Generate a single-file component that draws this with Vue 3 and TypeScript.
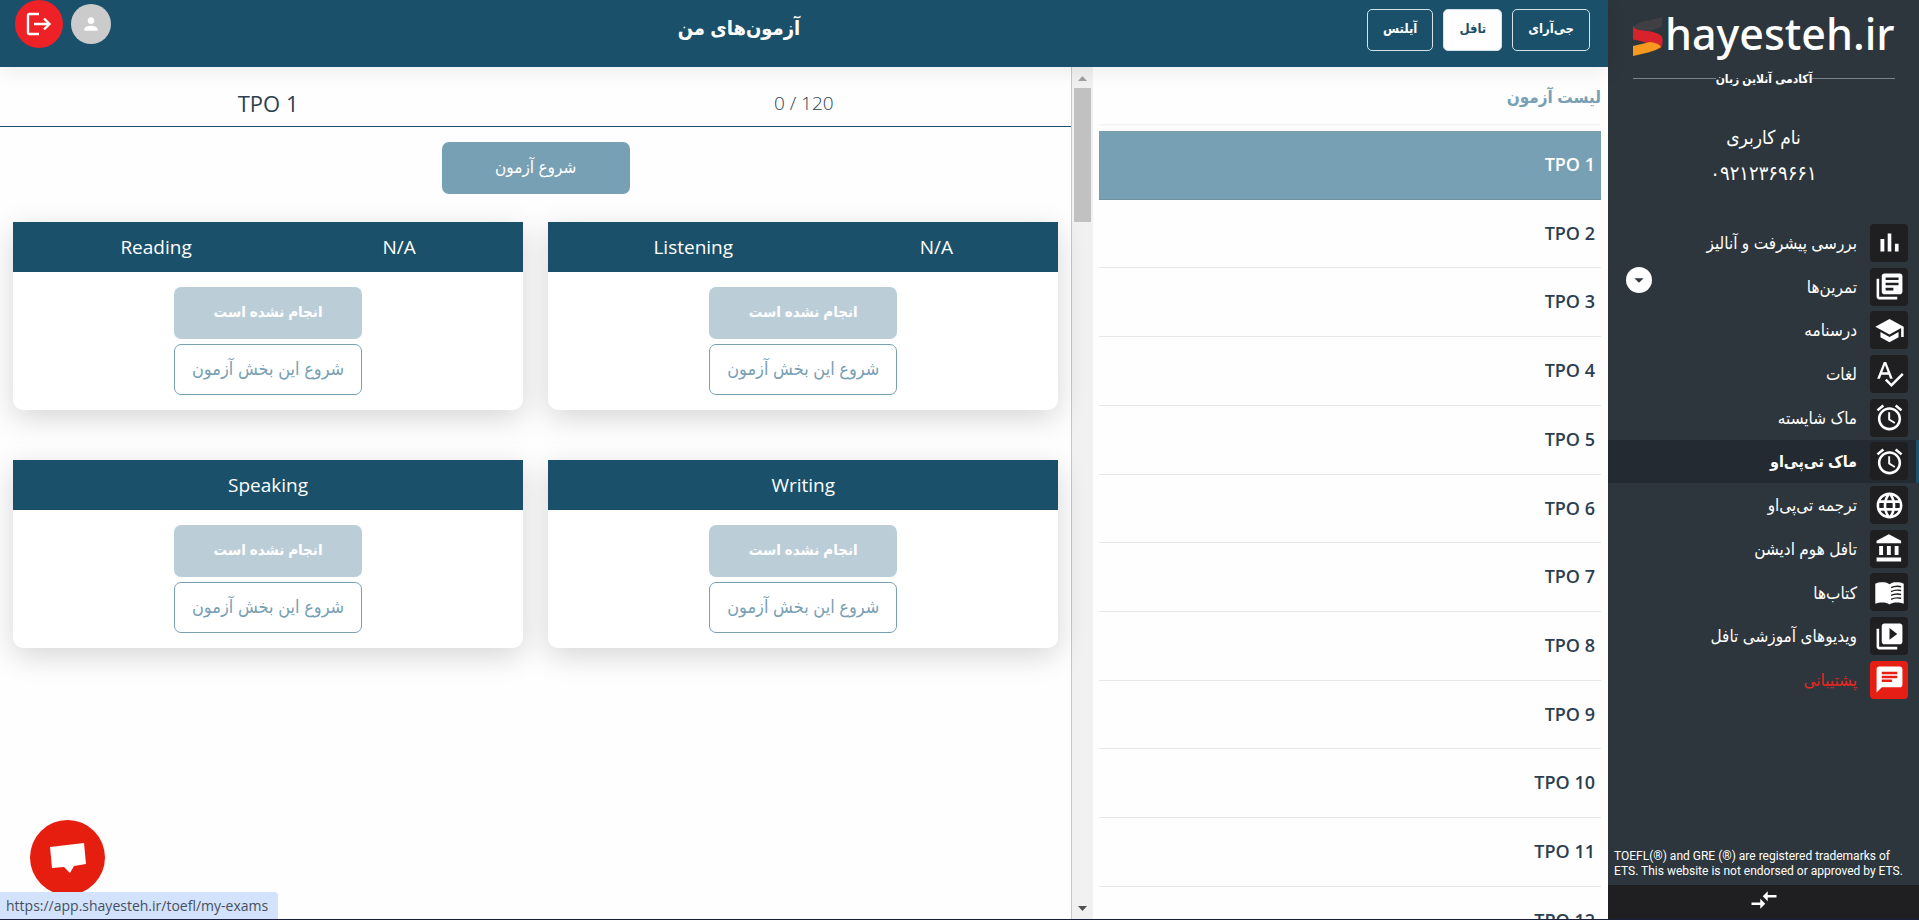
<script setup lang="ts">
import { ref } from 'vue'

interface NavItem {
  label: string
  icon: string
  lines?: string
  expandable?: boolean
  danger?: boolean
}

interface Section {
  name: string
  score?: string
}

const alarm =
  'M22 5.72l-4.6-3.86-1.29 1.53 4.6 3.86L22 5.72zM7.88 3.39L6.6 1.86 2 5.71l1.29 1.53 4.59-3.85zM12.5 8H11v6l4.75 2.85.75-1.23-4-2.37V8zM12 4c-4.97 0-9 4.03-9 9s4.02 9 9 9c4.97 0 9-4.03 9-9s-4.03-9-9-9zm0 16c-3.87 0-7-3.13-7-7s3.13-7 7-7 7 3.13 7 7-3.13 7-7 7z'

const navItems: NavItem[] = [
  { label: 'بررسی پیشرفت و آنالیز', icon: 'M5 9.2h3V19H5zM10.6 5h2.8v14h-2.8zm5.6 8H19v6h-2.8z' },
  {
    label: 'تمرین‌ها',
    expandable: true,
    icon: 'M4 6H2v14c0 1.1.9 2 2 2h14v-2H4V6zm16-4H8c-1.1 0-2 .9-2 2v12c0 1.1.9 2 2 2h12c1.1 0 2-.9 2-2V4c0-1.1-.9-2-2-2zm-1 9H9V9h10v2zm-4 4H9v-2h6v2zm4-8H9V5h10v2z',
  },
  { label: 'درسنامه', icon: 'M5 13.18v4L12 21l7-3.82v-4L12 17l-7-3.82zM12 3L1 9l11 6 9-4.91V17h2V9L12 3z' },
  {
    label: 'لغات',
    icon: 'M12.45 16h2.09L9.43 3H7.57L2.46 16h2.09l1.12-3h5.64l1.14 3zm-6.02-5L8.5 5.48 10.57 11H6.43zm15.16.59l-8.09 8.09L9.83 16l-1.41 1.41 5.09 5.09L23 13l-1.41-1.41z',
  },
  { label: 'ماک شایسته', icon: alarm },
  { label: 'ماک تی‌پی‌او', icon: alarm },
  {
    label: 'ترجمه تی‌پی‌او',
    icon: 'M11.99 2C6.47 2 2 6.48 2 12s4.47 10 9.99 10C17.52 22 22 17.52 22 12S17.52 2 11.99 2zm6.93 6h-2.95c-.32-1.25-.78-2.45-1.38-3.56 1.84.63 3.37 1.91 4.33 3.56zM12 4.04c.83 1.2 1.48 2.53 1.91 3.96h-3.82c.43-1.43 1.08-2.76 1.91-3.96zM4.26 14C4.1 13.36 4 12.69 4 12s.1-1.36.26-2h3.38c-.08.66-.14 1.32-.14 2 0 .68.06 1.34.14 2H4.26zm.82 2h2.95c.32 1.25.78 2.45 1.38 3.56-1.84-.63-3.37-1.9-4.33-3.56zm2.95-8H5.08c.96-1.66 2.49-2.93 4.33-3.56C8.81 5.55 8.35 6.75 8.03 8zM12 19.96c-.83-1.2-1.48-2.53-1.91-3.96h3.82c-.43 1.43-1.08 2.76-1.91 3.96zM14.34 14H9.66c-.09-.66-.16-1.32-.16-2 0-.68.07-1.35.16-2h4.68c.09.65.16 1.32.16 2 0 .68-.07 1.34-.16 2zm.25 5.56c.6-1.11 1.06-2.31 1.38-3.56h2.95c-.96 1.65-2.49 2.93-4.33 3.56zM16.36 14c.08-.66.14-1.32.14-2 0-.68-.06-1.34-.14-2h3.38c.16.64.26 1.31.26 2s-.1 1.36-.26 2h-3.38z',
  },
  {
    label: 'تافل هوم ادیشن',
    icon: 'M4 10v7h3v-7H4zm6 0v7h3v-7h-3zM2 22h19v-3H2v3zm14-12v7h3v-7h-3zm-4.5-9L2 6v2h19V6l-9.5-5z',
  },
  {
    label: 'کتاب‌ها',
    icon: 'M12 5.6C10 4.2 8.5 4 6.5 4S2.5 4.3 1 5.3V20.8C2.5 19.9 4.5 19.7 6.5 19.7S10.5 20 12 21.3C13.5 20 15.5 19.7 17.5 19.7S21.5 19.9 23 20.8V5.3C21.5 4.3 19.5 4 17.5 4S14 4.2 12 5.6z',
    lines: 'M13.2 8.3C15.5 7.1 18.5 7 21 7.5M13.2 11.3C15.5 10.1 18.5 10 21 10.5M13.2 14.3C15.5 13.1 18.5 13 21 13.5M13.2 17.3C15.5 16.1 18.5 16 21 16.5',
  },
  {
    label: 'ویدیوهای آموزشی تافل',
    icon: 'M4 6H2v14c0 1.1.9 2 2 2h14v-2H4V6zm16-4H8c-1.1 0-2 .9-2 2v12c0 1.1.9 2 2 2h12c1.1 0 2-.9 2-2V4c0-1.1-.9-2-2-2zm-8 12.5v-9l6 4.5-6 4.5z',
  },
  {
    label: 'پشتیبانی',
    danger: true,
    icon: 'M20 2H4c-1.1 0-1.99.9-1.99 2L2 22l4-4h14c1.1 0 2-.9 2-2V4c0-1.1-.9-2-2-2zM6 9h12v2H6V9zm8 5H6v-2h8v2zm4-6H6V6h12v2z',
  },
]

const courses = ['جی‌آرای', 'تافل', 'آیلتس']
const exams = Array.from({ length: 12 }, (_, i) => `TPO ${i + 1}`)
const sections: Section[] = [
  { name: 'Reading', score: 'N/A' },
  { name: 'Listening', score: 'N/A' },
  { name: 'Speaking' },
  { name: 'Writing' },
]

const activeNav = ref('ماک تی‌پی‌او')
const activeCourse = ref('تافل')
const activeExam = ref('TPO 1')
</script>

<template>
  <div class="app" dir="rtl" lang="fa">
    <aside class="sidebar">
      <div class="brand">
        <div class="brand-row" dir="ltr">
          <svg class="brand-mark" viewBox="0 0 30 40" aria-hidden="true">
            <path d="M1 10Q6 6 12 5T29 1V10Q26 13 15 15L0 13z" fill="#3f3f44" />
            <path d="M0 10Q2 14 10 14.5Q29 16 29.5 23Q30 30 27 33Q26 29 0 23.5z" fill="#d8222c" />
            <path d="M0 30L17 26Q26 27 28 31Q24 35 0 40z" fill="#f7991f" />
          </svg>
          <span class="brand-name">hayesteh.ir</span>
        </div>
        <div class="tagline"><span>آکادمی آنلاین زبان</span></div>
      </div>

      <div class="user">
        <div class="user-name">نام کاربری</div>
        <div class="user-phone">۰۹۲۱۲۳۶۹۶۶۱</div>
      </div>

      <nav class="nav">
        <div
          v-for="item in navItems"
          :key="item.label"
          class="nav-item"
          :class="{ active: item.label === activeNav, danger: item.danger }"
        >
          <a href="#" class="nav-link" @click.prevent="activeNav = item.label">
            <span class="nav-icon">
              <svg viewBox="0 0 24 24" aria-hidden="true">
                <path :d="item.icon" fill="#fff" />
                <path v-if="item.lines" :d="item.lines" fill="none" stroke="#1f1f22" stroke-width="1.1" />
              </svg>
            </span>
            <span>{{ item.label }}</span>
          </a>
          <button v-if="item.expandable" type="button" class="expand" :aria-label="item.label">
            <svg viewBox="0 0 24 24" aria-hidden="true"><path d="M7 10l5 5 5-5z" fill="#2d363c" /></svg>
          </button>
        </div>
      </nav>

      <p class="legal" dir="ltr" lang="en">
        TOEFL(®) and GRE (®) are registered trademarks of ETS. This website is not endorsed or approved by ETS.
      </p>
      <button type="button" class="collapse" aria-label="بستن منو">
        <svg viewBox="0 0 24 24" aria-hidden="true">
          <path d="M9.01 14H2v2h7.01v3L13 15l-3.99-4v3zm5.98-1v-3H22V8h-7.01V5L11 9l3.99 4z" fill="#fff" />
        </svg>
      </button>
    </aside>

    <div class="page">
      <header class="topbar">
        <div class="courses">
          <button
            v-for="course in courses"
            :key="course"
            type="button"
            class="course"
            :class="{ selected: course === activeCourse }"
            @click="activeCourse = course"
          >
            {{ course }}
          </button>
        </div>
        <h1 class="page-title">آزمون‌های من</h1>
        <div class="account">
          <button type="button" class="avatar" aria-label="پروفایل">
            <svg viewBox="0 0 24 24" aria-hidden="true">
              <path
                d="M12 12c2.21 0 4-1.79 4-4s-1.79-4-4-4-4 1.79-4 4 1.79 4 4 4zm0 2c-2.67 0-8 1.34-8 4v2h16v-2c0-2.66-5.33-4-8-4z"
                fill="#fff"
              />
            </svg>
          </button>
          <button type="button" class="logout" aria-label="خروج">
            <svg viewBox="0 0 26 24" aria-hidden="true">
              <path d="M13 2H3.5Q2 2 2 3.5v17Q2 22 3.5 22H13M8 12h15M18 6.5 23.5 12 18 17.5" fill="none" stroke="#fff" stroke-width="2.4" />
            </svg>
          </button>
        </div>
      </header>

      <div class="content">
        <section class="exam-pane">
          <div class="scrollbar" aria-hidden="true">
            <svg viewBox="0 0 21 21"><path d="M6 14h9l-4.5-5z" fill="#a0a0a0" /></svg>
            <div class="track"><div class="thumb"></div></div>
            <svg viewBox="0 0 21 21"><path d="M6 8h9l-4.5 5z" fill="#505050" /></svg>
          </div>
          <div class="exam-body">
            <h2 class="list-title">لیست آزمون</h2>
            <ul class="exam-list">
              <li v-for="exam in exams" :key="exam">
                <button
                  type="button"
                  class="exam"
                  :class="{ current: exam === activeExam }"
                  @click="activeExam = exam"
                >
                  <bdi>{{ exam }}</bdi>
                </button>
              </li>
            </ul>
          </div>
        </section>

        <main class="detail" dir="ltr">
          <div class="summary">
            <h2>{{ activeExam }}</h2>
            <span class="total">0 / 120</span>
          </div>
          <div class="start-row">
            <button type="button" class="action start">شروع آزمون</button>
          </div>
          <div class="cards">
            <article v-for="section in sections" :key="section.name" class="card">
              <header class="card-head">
                <span>{{ section.name }}</span>
                <span v-if="section.score">{{ section.score }}</span>
              </header>
              <div class="card-body">
                <button type="button" class="action status" disabled>انجام نشده است</button>
                <button type="button" class="action outline">شروع این بخش آزمون</button>
              </div>
            </article>
          </div>
        </main>
      </div>
    </div>

    <button type="button" class="chat" aria-label="گفتگو">
      <svg viewBox="0 0 36 30" aria-hidden="true">
        <path d="M0 4 34 0l2 21-12 2-4 7-6-6-12 1z" fill="#fff" />
      </svg>
    </button>
    <div class="status-url" dir="ltr">https://app.shayesteh.ir/toefl/my-exams</div>
  </div>
</template>

<style>
html,
body {
  margin: 0;
  background: #fefefe;
}
</style>

<style scoped>
.app {
  display: flex;
  height: 100vh;
  overflow: hidden;
  box-sizing: border-box;
  border-bottom: 1px solid #1b1f3b;
  font-family: 'Open Sans', 'DejaVu Sans Condensed', 'DejaVu Sans', sans-serif;
  font-size: 16px;
  color: #2c3e50;
}

button {
  font: inherit;
  border: 0;
  padding: 0;
  cursor: pointer;
}

svg {
  display: block;
}

/* Sidebar */
.sidebar {
  flex: 0 0 311px;
  min-width: 0;
  display: flex;
  flex-direction: column;
  background: #2d363c;
  color: #fff;
}

.brand {
  padding: 8px 24px 0 25px;
}

.brand-row {
  display: flex;
  align-items: center;
  gap: 2px;
  height: 56px;
}

.brand-mark {
  flex: none;
  width: 30px;
  height: 40px;
}

.brand-name {
  font-family: 'Noto Sans', sans-serif;
  font-size: 43px;
  line-height: 52px;
  font-weight: 500;
  padding-bottom: 4px;
}

.tagline {
  display: flex;
  align-items: center;
  height: 28px;
  font-size: 12px;
  font-weight: 700;
  white-space: nowrap;
}

.tagline::before,
.tagline::after {
  content: '';
  flex: 1;
  height: 1px;
  background: #78838a;
}

.user {
  padding: 27px 0 30px;
  text-align: center;
}

.user-name,
.user-phone {
  font-size: 19px;
  line-height: 36px;
}

.user-phone {
  font-size: 20px;
}

.nav-item {
  display: flex;
  align-items: center;
  justify-content: space-between;
  box-sizing: border-box;
  padding: 0 11px 0 18px;
}

.nav-item.active {
  background: #242a31;
  box-shadow: inset -3px 0 #1a5069;
  font-weight: 700;
}

.nav-item.danger {
  color: #e8281e;
}

.nav-link {
  display: flex;
  align-items: center;
  gap: 13px;
  padding: 8px 0;
  font-size: 17px;
  line-height: 1.63;
  color: inherit;
  text-decoration: none;
}

.active .nav-link {
  font-size: 16px;
  line-height: 1.73;
}

.nav-icon {
  display: flex;
  align-items: center;
  justify-content: center;
  width: 38px;
  height: 38px;
  margin: -6px 0;
  border-radius: 4px;
  background: #1f1f22;
}

.danger .nav-icon {
  background: #e61e14;
}

.nav-icon svg {
  width: 31px;
  height: 31px;
}

.expand {
  display: flex;
  align-items: center;
  justify-content: center;
  align-self: flex-start;
  width: 26px;
  height: 26px;
  margin-top: 2px;
  border-radius: 50%;
  background: #fff;
}

.expand svg {
  width: 22px;
  height: 22px;
}

.legal {
  margin: auto 0 0;
  padding: 0 6px 6px;
  font-family: Roboto, sans-serif;
  font-size: 12px;
  line-height: 15px;
}

.collapse {
  display: flex;
  align-items: center;
  justify-content: center;
  height: 34px;
  padding-bottom: 4px;
  background: #1f1f22;
}

.collapse svg {
  width: 30px;
  height: 30px;
}

/* Top bar */
.page {
  flex: 1;
  min-width: 0;
  display: flex;
  flex-direction: column;
}

.topbar {
  position: relative;
  z-index: 1;
  display: flex;
  align-items: flex-start;
  justify-content: space-between;
  height: 67px;
  padding: 0 18px 0 15px;
  background: #1a5069;
  box-shadow: 0 4px 20px rgba(0, 0, 0, 0.08);
  color: #fff;
}

.courses {
  display: flex;
  gap: 10px;
  padding-top: 9px;
}

.course {
  height: 42px;
  padding: 0 15px 4px;
  border: 1px solid #d5e2e8;
  border-radius: 5px;
  background: transparent;
  font-size: 13px;
  font-weight: 700;
  color: #fff;
}

.course.selected {
  background: #fff;
  color: #1a5069;
}

.page-title {
  margin: 0;
  font-size: 20px;
  line-height: 56px;
  font-weight: 700;
}

.account {
  display: flex;
  align-items: center;
  gap: 8px;
}

.avatar,
.logout {
  display: flex;
  align-items: center;
  justify-content: center;
  width: 40px;
  height: 40px;
  border-radius: 50%;
  background: #cbcbcb;
}

.avatar svg {
  width: 20px;
  height: 20px;
}

.logout {
  width: 48px;
  height: 48px;
  background: #ee2127;
}

.logout svg {
  width: 26px;
  height: 24px;
}

/* Exam list */
.content {
  flex: 1;
  min-height: 0;
  display: flex;
}

.exam-pane {
  flex: 1;
  display: flex;
  min-width: 0;
  border-left: 1px solid #c8c8c8;
  overflow: hidden;
}

.scrollbar {
  order: 1;
  flex: 0 0 21px;
  display: flex;
  flex-direction: column;
  background: #f1f1f1;
}

.track {
  flex: 1;
  padding: 0 2px;
}

.thumb {
  height: 16.5%;
  background: #c1c1c1;
}

.exam-body {
  flex: 1;
  min-width: 0;
  overflow: hidden;
  padding: 0 7px 0 6px;
}

.list-title {
  margin: 0 0 7px;
  height: 57px;
  line-height: 60px;
  font-size: 17px;
  font-weight: 700;
  color: #78a0b4;
  box-shadow: 0 2px 2px -1px #eee;
}

.exam-list {
  margin: 0;
  padding: 0;
  list-style: none;
}

.exam {
  display: block;
  width: 100%;
  padding: 20px 6px;
  border-bottom: 1px solid #e7e7e7;
  background: transparent;
  font-size: 18px;
  line-height: 1.54;
  font-weight: 600;
  text-align: right;
  color: #2c3e50;
}

.exam.current {
  background: #78a0b4;
  border-color: #7292a2;
  color: #fff;
}

/* Exam detail */
.detail {
  flex: 2;
  min-width: 0;
}

.summary {
  display: flex;
  justify-content: space-around;
  align-items: center;
  box-sizing: border-box;
  height: 60px;
  padding-top: 12px;
  border-bottom: 1px solid #1a5069;
  font-size: 19px;
  line-height: 28px;
}

.summary h2 {
  margin: 0;
  font-size: 22px;
  font-weight: 500;
}

.total {
  font-weight: 300;
}

.start-row {
  display: flex;
  justify-content: center;
  padding: 15px 0 28px;
}

.action {
  width: 188px;
  height: 52px;
  padding-bottom: 4px;
  border-radius: 7px;
  background: #78a0b4;
  font-size: 17px;
  color: #fff;
}

.cards {
  display: grid;
  grid-template-columns: 1fr 1fr;
  gap: 50px 25px;
  padding: 0 13px;
}

.card {
  border-radius: 0 0 10px 10px;
  background: #fff;
  box-shadow: 0 8px 30px rgba(0, 0, 0, 0.16);
}

.card-head {
  display: flex;
  justify-content: space-around;
  align-items: center;
  height: 50px;
  padding: 0 12px;
  background: #1a5069;
  font-size: 19px;
  color: #fff;
}

.card-body {
  display: flex;
  flex-direction: column;
  align-items: center;
  gap: 5px;
  padding: 15px 0;
}

.status {
  background: #bbced8;
  font-size: 15px;
  font-weight: 700;
}

.outline {
  height: 51px;
  border: 1px solid #78a0b4;
  background: #fff;
  font-size: 18px;
  color: #78a0b4;
}

/* Floating elements */
.chat {
  position: absolute;
  left: 30px;
  bottom: 25px;
  display: flex;
  align-items: center;
  justify-content: center;
  width: 75px;
  height: 75px;
  border-radius: 50%;
  background: #e61e10;
}

.chat svg {
  width: 36px;
  height: 30px;
}

.status-url {
  position: absolute;
  left: 0;
  bottom: 1px;
  padding: 1px 10px 0 6px;
  border-radius: 0 4px 0 0;
  background: #d3e3fd;
  font-size: 14px;
  line-height: 26px;
  color: #46505e;
}
</style>
